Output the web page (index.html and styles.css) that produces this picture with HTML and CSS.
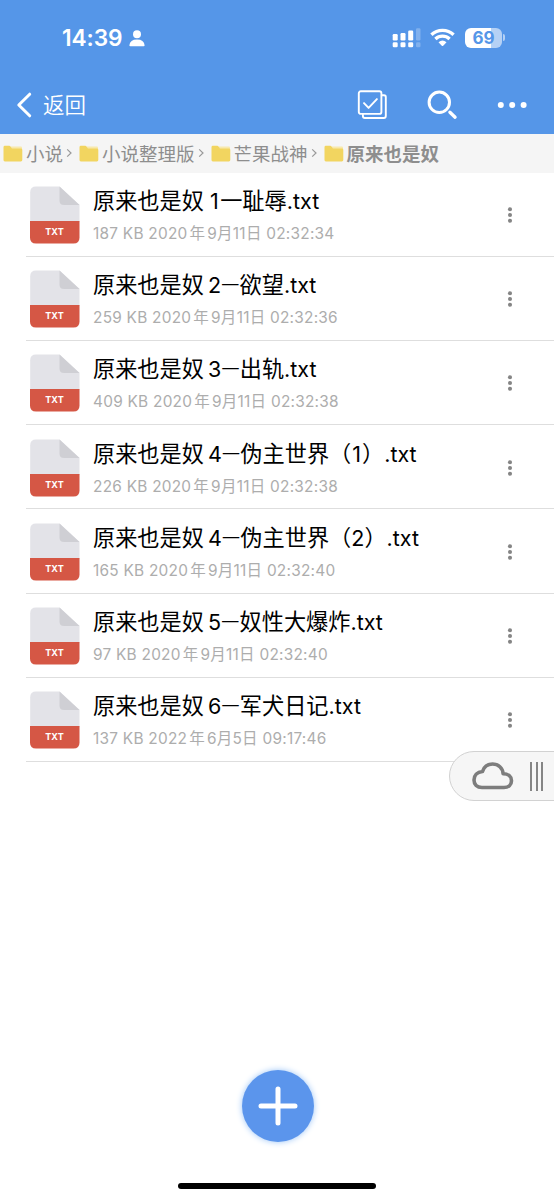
FILE: index.html
```html
<!DOCTYPE html>
<html lang="zh-CN">
<head>
<meta charset="utf-8">
<title>原来也是奴</title>
<link rel="stylesheet" href="styles.css">
</head>
<body>
<svg class="defs" width="0" height="0" aria-hidden="true">
  <symbol id="folder" viewBox="0 0 20 17"><path fill="#f8e9ad" d="M8 1.500h10q1 0 1 1v3H8z"/><path fill="#f2d560" d="M.5 2.2Q.5.8 1.9.8h4.3q.9 0 1.4.7l.9 1.500q.4.6 1.2.6h8.3q1.300 0 1.300 1.300v10.200q0 1.400-1.400 1.400H1.900q-1.400 0-1.400-1.400z"/></symbol>
  <symbol id="chev" viewBox="0 0 6 10"><path d="M1.200 1.400 5 5 1.200 8.600" fill="none" stroke="#999" stroke-width="1.200"/></symbol>
  <symbol id="file" viewBox="0 0 50 58"><path fill="#e3e3e8" d="M6 .5h23.500L49.500 19v17H.2V6.300Q.2.5 6 .5z"/><path fill="#cfcfd4" d="M29.500.5 49.500 19H34q-4.500 0-4.500-4.500z"/><path fill="#d55745" d="M0 35h49.500v16.500q0 6-6 6H6q-6 0-6-6z"/></symbol>
  <symbol id="more" viewBox="0 0 6 18"><g fill="#858585"><circle cx="3" cy="3.200" r="2.050"/><circle cx="3" cy="9" r="2.050"/><circle cx="3" cy="14.800" r="2.050"/></g></symbol>
</svg>
<div class="screen">
  <header class="top">
    <div class="status">
      <span class="time">14:39</span>
      <svg class="person" width="16" height="17" viewBox="0 0 16 17"><circle cx="8" cy="4.300" r="4" fill="#fff"/><path fill="#fff" d="M.4 15.200Q1 9.400 8 9.400t7.600 5.800q0 1-1 1H1.400q-1 0-1-1z"/></svg>
      <svg class="signal" width="30" height="20" viewBox="0 0 30 20"><g fill="#fff"><rect x=".7" y="6" width="5" height="6.500" rx="1.200"/><rect x="8.500" y="5" width="5" height="7.500" rx="1.200"/><rect x="16.200" y="2.500" width="5" height="10" rx="1.200"/><rect x=".7" y="14.300" width="5" height="5" rx="1.300"/><rect x="8.500" y="14.300" width="5" height="5" rx="1.300"/><rect x="16.200" y="14.300" width="5" height="5" rx="1.300"/><g opacity=".25"><rect x="24" y=".3" width="4.500" height="12.200" rx="1.200"/><rect x="24" y="14.300" width="4.500" height="5" rx="1.300"/></g></g></svg>
      <svg class="wifi" width="25" height="19" viewBox="0 0 25 19"><g fill="none" stroke="#fff" stroke-width="3.300"><path d="M1.400 6.800a16 16 0 0 1 22.200 0"/><path d="M5.400 11a10.300 10.300 0 0 1 14.200 0"/></g><path fill="#fff" d="M8.500 14.300q4-3.400 8 0L13.200 17.700q-.7.700-1.400 0z"/></svg>
      <span class="battery"><span class="level">69</span></span><i class="cap"></i>
    </div>
    <nav class="bar">
      <svg class="back" width="16" height="26" viewBox="0 0 16 26"><path d="M13.700 2.200 2.800 13l10.900 10.800" fill="none" stroke="#fff" stroke-width="3" stroke-linecap="round" stroke-linejoin="round"/></svg>
      <span class="back-text">返回</span>
      <svg class="select" width="30" height="30" viewBox="0 0 30 30"><g fill="none" stroke="#fff" stroke-width="1.900" stroke-linejoin="round" stroke-linecap="round"><rect x="1.800" y="1.300" width="22.600" height="22.600" rx="2"/><path d="M24.800 5.200h2.200q1.800 0 1.800 1.800v19q0 2-2 2H7.800q-1.900 0-1.900-1.900V24.500M7 13.100l4.600 4.800 8.300-8.800"/></g></svg>
      <svg class="search" width="31" height="30" viewBox="0 0 31 30"><g fill="none" stroke="#fff" stroke-linecap="round"><circle cx="12.300" cy="12.300" r="10.200" stroke-width="3"/><path d="m22.900 22.200 5.200 5" stroke-width="3.300"/></g></svg>
      <svg class="dots" width="30" height="8" viewBox="0 0 30 8"><g fill="#fff"><circle cx="3.800" cy="4" r="3"/><circle cx="15.200" cy="4" r="3"/><circle cx="26.600" cy="4" r="3"/></g></svg>
    </nav>
  </header>
  <div class="crumbs">
    <span class="crumb"><svg class="folder"><use href="#folder"/></svg>小说<svg class="chev"><use href="#chev"/></svg></span>
    <span class="crumb"><svg class="folder"><use href="#folder"/></svg>小说整理版<svg class="chev"><use href="#chev"/></svg></span>
    <span class="crumb"><svg class="folder"><use href="#folder"/></svg>芒果战神<svg class="chev"><use href="#chev"/></svg></span>
    <span class="crumb current"><svg class="folder"><use href="#folder"/></svg>原来也是奴</span>
  </div>
  <main class="list">
    <div class="row"><div class="icon"><svg><use href="#file"/></svg><b>TXT</b></div><div class="info"><div class="name">原来也是奴<span class="num one">1</span>一耻辱<span class="ext">.txt</span></div><div class="meta">187 KB 2020<span class="cj year">年</span>9<span class="cj">月</span>11<span class="cj">日</span> 02:32:34</div></div><svg class="more"><use href="#more"/></svg></div>
    <div class="row"><div class="icon"><svg><use href="#file"/></svg><b>TXT</b></div><div class="info"><div class="name">原来也是奴<span class="num">2</span><span class="dash">—</span>欲望<span class="ext">.txt</span></div><div class="meta">259 KB 2020<span class="cj year">年</span>9<span class="cj">月</span>11<span class="cj">日</span> 02:32:36</div></div><svg class="more"><use href="#more"/></svg></div>
    <div class="row"><div class="icon"><svg><use href="#file"/></svg><b>TXT</b></div><div class="info"><div class="name">原来也是奴<span class="num">3</span><span class="dash">—</span>出轨<span class="ext">.txt</span></div><div class="meta">409 KB 2020<span class="cj year">年</span>9<span class="cj">月</span>11<span class="cj">日</span> 02:32:38</div></div><svg class="more"><use href="#more"/></svg></div>
    <div class="row"><div class="icon"><svg><use href="#file"/></svg><b>TXT</b></div><div class="info"><div class="name">原来也是奴<span class="num">4</span><span class="dash">—</span>伪主世界（<span class="ext part">1</span>）<span class="ext">.txt</span></div><div class="meta">226 KB 2020<span class="cj year">年</span>9<span class="cj">月</span>11<span class="cj">日</span> 02:32:38</div></div><svg class="more"><use href="#more"/></svg></div>
    <div class="row"><div class="icon"><svg><use href="#file"/></svg><b>TXT</b></div><div class="info"><div class="name">原来也是奴<span class="num">4</span><span class="dash">—</span>伪主世界（<span class="ext">2</span>）<span class="ext">.txt</span></div><div class="meta">165 KB 2020<span class="cj year">年</span>9<span class="cj">月</span>11<span class="cj">日</span> 02:32:40</div></div><svg class="more"><use href="#more"/></svg></div>
    <div class="row"><div class="icon"><svg><use href="#file"/></svg><b>TXT</b></div><div class="info"><div class="name">原来也是奴<span class="num">5</span><span class="dash">—</span>奴性大爆炸<span class="ext">.txt</span></div><div class="meta">97 KB 2020<span class="cj year">年</span>9<span class="cj">月</span>11<span class="cj">日</span> 02:32:40</div></div><svg class="more"><use href="#more"/></svg></div>
    <div class="row"><div class="icon"><svg><use href="#file"/></svg><b>TXT</b></div><div class="info"><div class="name">原来也是奴<span class="num">6</span><span class="dash">—</span>军犬日记<span class="ext">.txt</span></div><div class="meta">137 KB 2022<span class="cj year">年</span>6<span class="cj">月</span>5<span class="cj">日</span> 09:17:46</div></div><svg class="more"><use href="#more"/></svg></div>
  </main>
  <div class="cloud">
    <svg width="42" height="28" viewBox="0 0 42 28"><path d="M10 25.500C5 25.500 2 22.300 2 18c0-4.500 3-8 8.500-8.500C12 4.700 15.700 2 20.600 2c5.700 0 10.200 4 10.500 9.700 5.200.1 8.400 3 8.400 7 0 4.100-3 6.800-7.500 6.800z" fill="none" stroke="#7d7d7d" stroke-width="3.600" stroke-linejoin="round"/></svg>
    <i class="grip"></i>
  </div>
  <button class="add" aria-label="添加"><svg width="40" height="40" viewBox="0 0 40 40"><path d="M20 3v34M3 20h34" stroke="#fff" stroke-width="5" stroke-linecap="round"/></svg></button>
  <div class="home"></div>
</div>
</body>
</html>
```
FILE: styles.css
```css
body { margin: 0; background: #fff; font-family: Inter, "Noto Sans CJK SC", sans-serif; }
svg { display: block; flex: none; }
.defs { position: absolute; }
.screen { position: relative; width: 554px; height: 1200px; overflow: hidden; background: #fff; }
.top { height: 134px; background: #5596e8; color: #fff; }
.status { display: flex; align-items: center; height: 75px; padding-left: 62px; }
.time { width: 62px; font-size: 22.700px; font-weight: 600; letter-spacing: -.1px; white-space: nowrap; }
.person { margin: 1px 0 0 5px; }
.signal { margin: 0 0 0 247px; }
.wifi { margin-left: 8px; }
.battery { display: flex; width: 37px; height: 20px; margin-left: 10px; border-radius: 6px; background: linear-gradient(90deg, #fff 70%, #b5d1f5 70%); }
.level { width: 100%; text-align: center; font-size: 17px; line-height: 20px; font-weight: 700; color: #5596e8; }
.cap { width: 2px; height: 7px; margin-left: 1px; border-radius: 0 3px 3px 0; background: #b5d1f5; }
.bar { display: flex; align-items: center; height: 59px; padding-left: 16px; }
.back-text { margin: -1px 0 0 11px; width: 56px; font: 350 21.500px/30px "Noto Sans CJK SC", sans-serif; }
.select { margin-left: 258px; }
.search { margin-left: 40px; }
.dots { margin-left: 39px; }
.crumbs { display: flex; height: 38.700px; padding-left: 3px; background: #f5f5f5; color: #8e8e8e; font: 18.500px/38px "Noto Sans CJK SC", sans-serif; }
.crumb { display: flex; align-items: center; height: 38px; margin-right: 7px; white-space: nowrap; }
.folder { width: 20px; height: 17px; margin-right: 3px; }
.chev { width: 6px; height: 10px; margin-left: 3px; }
.current { font-weight: 700; }
.row { box-sizing: border-box; display: flex; height: 84.200px; margin-left: 26px; border-bottom: 1px solid #dedede; }
.icon { position: relative; width: 50px; height: 58px; margin: 13.300px 0 0 3.500px; }
.icon svg { width: 50px; height: 58px; }
.icon b { position: absolute; left: 0; top: 39px; width: 50px; text-align: center; color: #fff; font-size: 9px; line-height: 13px; font-weight: 700; }
.info { flex: 1; padding: 10.300px 0 0 13.500px; }
.name { height: 32px; color: #000; font: 22.200px/32px "Noto Sans CJK SC", sans-serif; white-space: nowrap; }
.num, .ext, .dash { font-family: Inter, sans-serif; font-size: 21.500px; }
.num { margin-left: 4px; }
.one { margin: 0 1.500px 0 6px; }
.part { margin: 0 1px; }
.dash { display: inline-block; width: 18.500px; font-size: 16.500px; line-height: 20px; text-align: center; vertical-align: 3px; }
.meta { height: 24px; margin-top: 5px; color: #adadad; font-size: 15.400px; line-height: 24px; letter-spacing: .25px; white-space: nowrap; }
.cj { font-family: "Noto Sans CJK SC", sans-serif; font-size: 15.500px; }
.year { margin: 0 2px; }
.more { width: 6px; height: 18px; margin: 33.300px 41px 0 0; }
.cloud { position: absolute; box-sizing: border-box; left: 449px; top: 751px; width: 110px; height: 50px; display: flex; align-items: center; padding-left: 22px; border: 1.500px solid #d2d2d2; border-radius: 25px 0 0 25px; background: #f6f6f6; }
.grip { box-sizing: border-box; width: 13px; height: 29px; margin-left: 16px; border: solid #858585; border-width: 0 2px; background: linear-gradient(90deg, transparent 3.500px, #858585 3.500px 5.500px, transparent 5.500px); }
.add { position: absolute; left: 242px; top: 1070px; width: 72px; height: 72px; padding: 0; display: flex; align-items: center; justify-content: center; border: 0; border-radius: 50%; background: #5b95ec; box-shadow: 0 0 6px #9cc5f7; }
.home { position: absolute; left: 178px; top: 1183px; width: 198px; height: 6px; border-radius: 3px; background: #000; }
```
